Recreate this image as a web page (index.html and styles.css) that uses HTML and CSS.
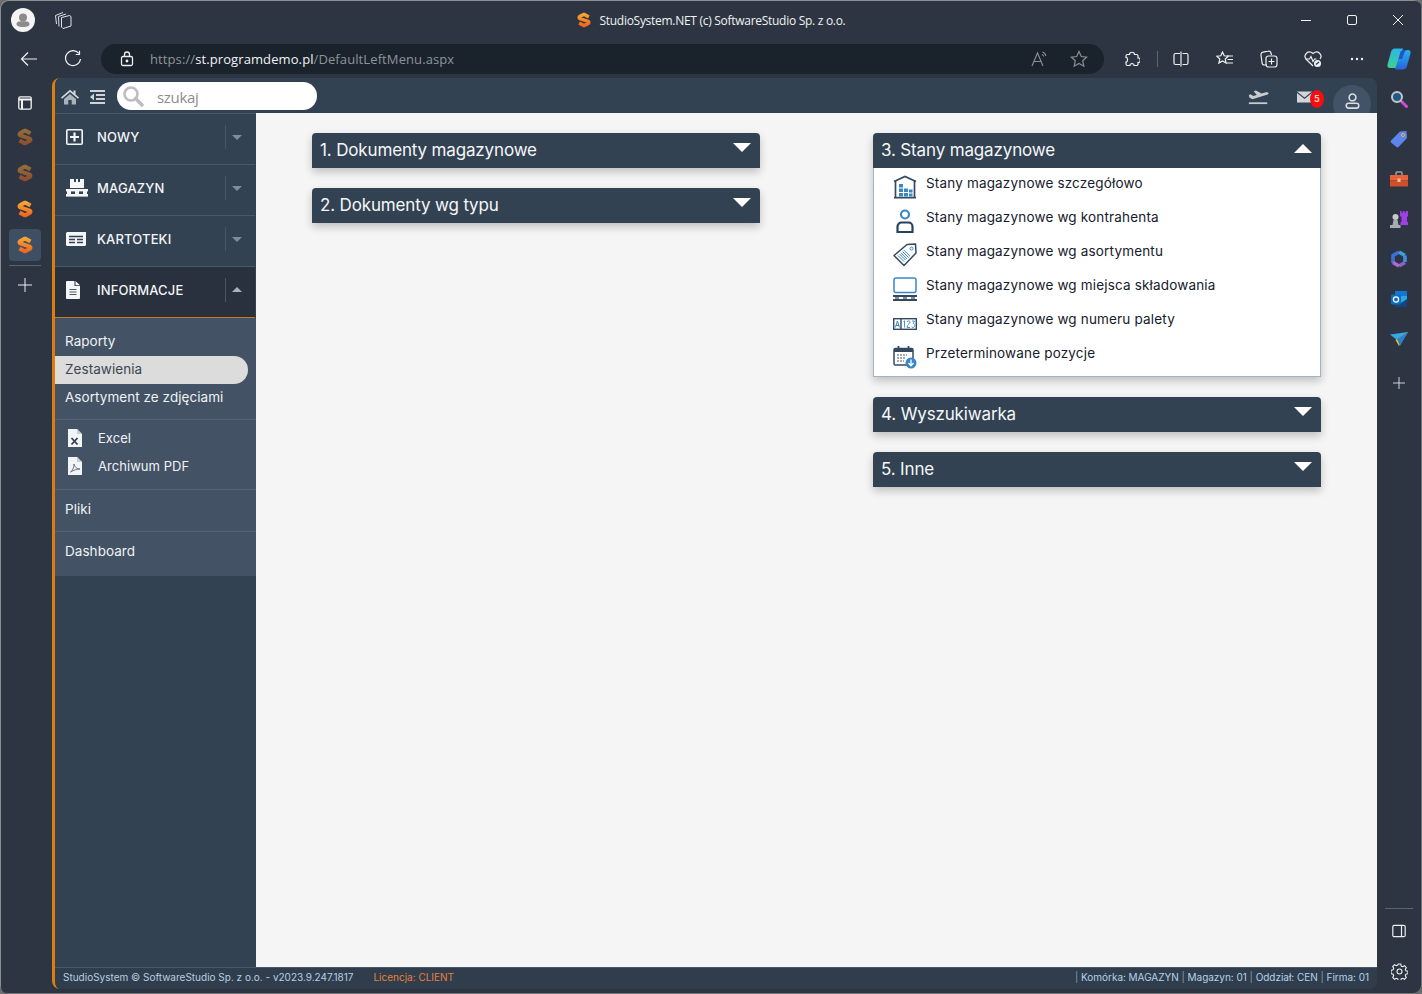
FILE: index.html
```html
<!DOCTYPE html>
<html lang="pl">
<head>
<meta charset="utf-8">
<title>StudioSystem.NET</title>
<link rel="stylesheet" href="styles.css">
</head>
<body>
<svg class="defs" aria-hidden="true">
  <defs>
    <linearGradient id="sgrad" x1="0" y1="0" x2="0" y2="18" gradientUnits="userSpaceOnUse">
      <stop offset="0" stop-color="#fbae35"/><stop offset="1" stop-color="#ee5d1c"/>
    </linearGradient>
    <linearGradient id="cop1" x1="0" y1="0" x2="0" y2="1">
      <stop offset="0" stop-color="#2bb7e8"/><stop offset="1" stop-color="#3fd08f"/>
    </linearGradient>
    <linearGradient id="cop2" x1="0" y1="0" x2="0" y2="1">
      <stop offset="0" stop-color="#22b4ef"/><stop offset="1" stop-color="#2a62dc"/>
    </linearGradient>
    <symbol id="slogo" viewBox="0 0 16 18">
      <polyline points="13.500,5.500 8,2.400 2.600,5.400 2.600,7.200 13.400,10.800 13.400,12.600 8,15.600 2.500,12.500" fill="none" stroke="url(#sgrad)" stroke-width="4" stroke-linejoin="bevel"/>
    </symbol>
  </defs>
</svg>
<div class="window">
  <header class="titlebar">
    <div class="tb-left">
      <span class="avatar">
        <svg width="24" height="24" viewBox="0 0 24 24"><circle cx="12" cy="12" r="12" fill="#f4f4f4"/><circle cx="12" cy="9.500" r="4" fill="#8b8b8b"/><path d="M5.500 16c0-2 2-2.700 6.500-2.700s6.500.7 6.500 2.700c0 1.800-2 3-6.500 3s-6.500-1.200-6.500-3z" fill="#8b8b8b"/></svg>
      </span>
      <svg class="tabs-ico" width="18" height="18" viewBox="0 0 18 18" fill="none" stroke="#dfe3e7" stroke-width="1"><path d="M7.500 6.500L15.500 4.500L17 5.500V15L9 17.500L7.500 16z"/><path d="M5 15.500L4.500 5.500L12 3"/><path d="M2.500 13L1.500 4.500L9 1.500"/></svg>
    </div>
    <div class="tb-title">
      <svg width="14" height="16"><use href="#slogo"/></svg>
      <span>StudioSystem.NET (c) SoftwareStudio Sp. z o.o.</span>
    </div>
    <div class="tb-controls">
      <span class="ctl"><svg width="12" height="12" viewBox="0 0 12 12"><path d="M1 6.500h10" stroke="#f2f2f2" stroke-width="1"/></svg></span>
      <span class="ctl"><svg width="12" height="12" viewBox="0 0 12 12"><rect x="1.500" y="1.500" width="9" height="9" rx="1.500" fill="none" stroke="#f2f2f2"/></svg></span>
      <span class="ctl"><svg width="12" height="12" viewBox="0 0 12 12"><path d="M1 1l10 10M11 1L1 11" stroke="#f2f2f2" stroke-width="1"/></svg></span>
    </div>
  </header>

  <div class="toolbar">
    <span class="tbtn"><svg width="18" height="16" viewBox="0 0 18 16" fill="none" stroke="#f0f2f4" stroke-width="1.200"><path d="M17 8H1.500M8 1.500L1.500 8 8 14.500"/></svg></span>
    <span class="tbtn"><svg width="18" height="18" viewBox="0 0 18 18" fill="none" stroke="#f0f2f4" stroke-width="1.200"><path d="M15 3.500A7.500 7.500 0 1 0 16.500 9"/><path d="M15.500 .8v3.700h-3.700"/></svg></span>
    <div class="address">
      <svg class="lock" width="14" height="16" viewBox="0 0 14 16" fill="none" stroke="#eceef0" stroke-width="1.300"><rect x="1.500" y="5.500" width="11" height="9" rx="1.500"/><path d="M4.500 5.500V3.500a2.500 2.500 0 0 1 5 0v2"/><circle cx="7" cy="10" r=".8" fill="#eceef0"/></svg>
      <span class="url"><span class="dim">https://</span>st.programdemo.pl<span class="dim">/DefaultLeftMenu.aspx</span></span>
      <svg class="read" width="18" height="16" viewBox="0 0 18 16" fill="none" stroke="#8b9096" stroke-width="1.100"><path d="M1 15L6.500 2 12 15M3 10.500h7"/><path d="M11.500 1c2 .6 3 2 3.300 4M11 3.500c1 .3 1.500 1 1.700 2"/></svg>
      <svg class="star" width="18" height="18" viewBox="0 0 18 18" fill="none" stroke="#8b9096" stroke-width="1.200"><path d="M9 1.500l2.300 5 5.400.6-4 3.700 1.100 5.400L9 13.500l-4.800 2.700 1.100-5.400-4-3.700 5.400-.6z"/></svg>
    </div>
    <span class="tbtn tbtn-first"><svg width="16" height="16" viewBox="0 0 16 16" fill="none" stroke="#eef0f2" stroke-width="1.200"><path d="M5.500 3.500c0-3 5-3 5 0h2a1.500 1.500 0 0 1 1.500 1.500v2c3-.5 3 5 0 4.500v1.500a1.500 1.500 0 0 1-1.500 1.500H10c.5-2.500-4.500-2.500-4 0H3.500A1.500 1.500 0 0 1 2 13v-2c2 .5 2-5 0-4.500V5a1.500 1.500 0 0 1 1.500-1.500z"/></svg></span>
    <span class="tsep"></span>
    <span class="tbtn tbtn-split"><svg width="16" height="16" viewBox="0 0 16 16" fill="none" stroke="#eef0f2" stroke-width="1.200"><path d="M7 2.500H2.500a1.500 1.500 0 0 0-1.500 1.500v8a1.500 1.500 0 0 0 1.500 1.500H7M9.500 2.500h4a1.500 1.500 0 0 1 1.500 1.500v8a1.500 1.500 0 0 1-1.500 1.500h-4M8 .5v15"/></svg></span>
    <span class="tbtn"><svg width="18" height="16" viewBox="0 0 18 16" fill="none" stroke="#eef0f2" stroke-width="1.200"><path d="M6.500 1l1.700 3.800 4 .4-3 2.800.9 4-3.600-2-3.600 2 .9-4-3-2.800 4-.4z"/><path d="M11 5h6M11.500 8.500H17M10.500 12H17"/></svg></span>
    <span class="tbtn"><svg width="18" height="18" viewBox="0 0 18 18" fill="none" stroke="#eef0f2" stroke-width="1.200"><path d="M7 15H4.500A2.500 2.500 0 0 1 2 12.500L1 5a2.500 2.500 0 0 1 2-2.800l5-1a2.500 2.500 0 0 1 3 1.800l.5 2"/><rect x="6" y="6" width="11" height="11" rx="2.500"/><path d="M11.500 8.500v6M8.500 11.500h6"/></svg></span>
    <span class="tbtn"><svg width="18" height="18" viewBox="0 0 18 18" fill="none" stroke="#eef0f2" stroke-width="1.200"><path d="M9 16L2 9C-1 5 4-.5 9 3.500 14-.5 19 5 16 9"/><path d="M1.500 9h4l1.500-2.500 2 5 1.500-2.500h2"/><circle cx="13.500" cy="13.500" r="3.500" fill="#eef0f2" stroke="none"/><path d="M12 14.500l3-2.500" stroke="#2c3540"/></svg></span>
    <span class="tbtn"><svg width="14" height="4" viewBox="0 0 14 4"><circle cx="2" cy="2" r="1.200" fill="#f0f2f4"/><circle cx="7" cy="2" r="1.200" fill="#f0f2f4"/><circle cx="12" cy="2" r="1.200" fill="#f0f2f4"/></svg></span>
    <span class="tbtn tbtn-cop"><svg width="24" height="24" viewBox="0 0 24 24"><path d="M8 1.500H16L10.500 19c-.5 1.500-2 2-3.500 2H3C1 21 0 19.500 .5 17.500L4 5C4.500 3 6 1.500 8 1.500z" fill="url(#cop1)"/><path d="M16 22.500H8L13.500 5c.5-1.500 2-2 3.500-2H21c2 0 3 1.500 2.500 3.500L20 19c-.5 2-2 3.500-4 3.500z" fill="url(#cop2)"/><path d="M13.500 5c.5-1.500 2-2 3.500-2H21c-2 0-3 1-3.500 2.500L15 12h-3.500z" fill="#2452c8"/></svg></span>
  </div>

  <div class="body">
    <nav class="rail-left">
      <span class="rail-item rail-item-top"><svg width="14" height="14" viewBox="0 0 14 14" fill="none" stroke="#f4f5f6" stroke-width="1.300"><rect x=".8" y=".8" width="12.400" height="12.400" rx="1.500"/><path d="M.8 3.500h12.400" stroke-width="2"/><path d="M4 3.500v9.700" stroke-width="2"/></svg></span>
      <span class="rail-item rail-dim"><svg width="16" height="18"><use href="#slogo"/></svg></span>
      <span class="rail-item rail-dim"><svg width="16" height="18"><use href="#slogo"/></svg></span>
      <span class="rail-item"><svg width="16" height="18"><use href="#slogo"/></svg></span>
      <span class="rail-item rail-active"><svg width="16" height="18"><use href="#slogo"/></svg></span>
      <span class="rail-divider"></span>
      <span class="rail-add"><svg width="14" height="14" viewBox="0 0 14 14"><path d="M7 0v14M0 7h14" stroke="#eef0f2" stroke-width="1"/></svg></span>
    </nav>

    <div class="app">
      <div class="topbar">
        <div class="tb-group">
          <svg class="home" width="18" height="16" viewBox="0 0 18 16"><path d="M9 .8L0 8.500l1 1.200L9 3l8 6.700 1-1.200-3.500-3V1.500H12.500v2.300z" fill="#d4d9de"/><path d="M3 10l6-5 6 5v5.500h-4.300V11H7.300v4.500H3z" fill="#aab1b8"/></svg>
          <svg class="outdent" width="15" height="14" viewBox="0 0 15 14" fill="#cfd4d9"><rect x="0" y="0" width="15" height="2"/><rect x="6" y="4" width="9" height="2"/><rect x="6" y="8" width="9" height="2"/><rect x="0" y="12" width="15" height="2"/><path d="M4 3.500v7L0 7z"/></svg>
          <div class="search">
            <svg width="22" height="22" viewBox="0 0 22 22" fill="none" stroke="#bdbdbd"><circle cx="9" cy="9" r="6.500" stroke-width="2.600"/><path d="M13.500 13.500l6.500 6.500" stroke-width="3.400" stroke-linecap="round"/></svg>
            <span class="placeholder">szukaj</span>
          </div>
        </div>
        <div class="tb-group tb-right">
          <svg class="plane" width="21" height="15" viewBox="0 0 24 16" fill="#c8cdd2"><path d="M1 5l2-.7 3 2 4-1.300L6.500.8l2.500-.8 6.500 3.500 5-1.500c2-.5 3 .5 3 1.300s-1 1.200-2 1.500L5 10 1.500 8z"/><rect x="1" y="13.500" width="21" height="2"/></svg>
          <span class="mail">
            <svg width="15" height="12" viewBox="0 0 15 11"><path d="M0 0h15L7.500 6z" fill="#d2d6da"/><path d="M0 1.500V11h15V1.500L7.500 7.500z" fill="#d2d6da"/></svg>
            <span class="badge">5</span>
          </span>
          <span class="usercircle">
            <svg width="15" height="16" viewBox="0 0 16 18" fill="none" stroke="#d8dde2" stroke-width="1.800"><circle cx="8" cy="5" r="3.800"/><rect x="1" y="11.500" width="14" height="5.500" rx="2.500"/></svg>
          </span>
        </div>
      </div>

      <div class="workspace">
        <aside class="sidebar">
          <div class="sb-row">
            <svg class="sb-ico" width="17" height="16" viewBox="0 0 17 16"><rect x=".8" y=".8" width="15.400" height="14.400" rx="1" fill="none" stroke="#f5f6f7" stroke-width="1.600"/><path d="M8.500 3.500v9M4 8h9" stroke="#f5f6f7" stroke-width="2.200"/></svg>
            <span class="sb-label">NOWY</span>
            <span class="sb-sep"></span>
            <span class="caret-down"></span>
          </div>
          <div class="sb-row">
            <svg class="sb-ico" width="22" height="18" viewBox="0 0 22 18" fill="#f5f6f7"><path d="M4 0h4v3h2V0h2v3h2V0h4v9H4z"/><rect x="0" y="10" width="22" height="2.400"/><rect x="0" y="15" width="22" height="2.600"/><rect x="1" y="12" width="4" height="3"/><rect x="9" y="12" width="4" height="3"/><rect x="17" y="12" width="4" height="3"/></svg>
            <span class="sb-label">MAGAZYN</span>
            <span class="sb-sep"></span>
            <span class="caret-down"></span>
          </div>
          <div class="sb-row">
            <svg class="sb-ico" width="20" height="14" viewBox="0 0 20 14"><path d="M1.500 0H20v12.500a1.500 1.500 0 0 1-1.500 1.500H1.500A1.500 1.500 0 0 1 0 12.500V1.500A1.500 1.500 0 0 1 1.500 0z" fill="#f5f6f7"/><path d="M3 4.500h14M3 7.500h6M11 7.500h6M3 10.500h6M11 10.500h6" stroke="#334252" stroke-width="1.300"/></svg>
            <span class="sb-label">KARTOTEKI</span>
            <span class="sb-sep"></span>
            <span class="caret-down"></span>
          </div>
          <div class="sb-row sb-row-open">
            <svg class="sb-ico" width="14" height="18" viewBox="0 0 14 18"><path d="M0 1a1 1 0 0 1 1-1h7.500v5H14v12a1 1 0 0 1-1 1H1a1 1 0 0 1-1-1z" fill="#f5f6f7"/><path d="M9.500 0L14 4.200H9.500z" fill="#f5f6f7"/><path d="M3.500 8.500h7M3.500 11h7M3.500 13.500h7" stroke="#4a5868"/></svg>
            <span class="sb-label">INFORMACJE</span>
            <span class="sb-sep"></span>
            <span class="caret-up"></span>
          </div>
          <div class="submenu">
            <div class="sub-group sub-first">
              <a class="sub-item">Raporty</a>
              <a class="sub-item sub-active">Zestawienia</a>
              <a class="sub-item">Asortyment ze zdjęciami</a>
            </div>
            <div class="sub-group sub-files">
              <a class="sub-item sub-file">
                <svg width="14" height="18" viewBox="0 0 14 18"><path d="M0 0h9l5 5v13H0z" fill="#f2f4f6"/><path d="M9 0v5h5" fill="#c5ccd3"/><path d="M3.500 9l6 6.500M9.500 9l-6 6.500" stroke="#33414f" stroke-width="1.800"/></svg>
                <span>Excel</span>
              </a>
              <a class="sub-item sub-file">
                <svg width="14" height="18" viewBox="0 0 14 18"><path d="M0 0h9l5 5v13H0z" fill="#f2f4f6"/><path d="M9 0v5h5" fill="#c5ccd3"/><path d="M2.500 15c2-1 3.500-4.500 3.500-8 1 3.500 3 5 6 5-3 0-6 1-9.500 3z" fill="none" stroke="#6b7783" stroke-width="1"/></svg>
                <span>Archiwum PDF</span>
              </a>
            </div>
            <div class="sub-group sub-single"><a class="sub-item">Pliki</a></div>
            <div class="sub-group sub-single"><a class="sub-item">Dashboard</a></div>
          </div>
        </aside>

        <main class="content">
          <div class="col">
            <section class="panel">
              <h2 class="panel-head"><span>1. Dokumenty magazynowe</span><i class="tri-down"></i></h2>
            </section>
            <section class="panel">
              <h2 class="panel-head"><span>2. Dokumenty wg typu</span><i class="tri-down"></i></h2>
            </section>
          </div>
          <div class="col">
            <section class="panel">
              <h2 class="panel-head"><span>3. Stany magazynowe</span><i class="tri-up"></i></h2>
              <ul class="panel-body">
                <li class="p-item">
                  <svg width="24" height="24" viewBox="0 0 24 24" fill="none"><path d="M1 6.500L12 1.500l11 5" stroke="#34495e" stroke-width="1.700"/><path d="M2.500 6v16M21.500 6v16" stroke="#34495e" stroke-width="1.700"/><rect x="1" y="21.800" width="22" height="1.700" fill="#34495e"/><g fill="#3a86c8"><rect x="6" y="9" width="4" height="3.500"/><rect x="6" y="13.500" width="4" height="3.500"/><rect x="6" y="18" width="4" height="3.500"/><rect x="11" y="13.500" width="4" height="3.500"/><rect x="11" y="18" width="4" height="3.500"/><rect x="16" y="14.500" width="3.500" height="3"/><rect x="16" y="18.500" width="3.500" height="3"/></g></svg>
                  <span>Stany magazynowe szczegółowo</span>
                </li>
                <li class="p-item">
                  <svg width="24" height="24" viewBox="0 0 24 24" fill="none" stroke-width="2.200"><circle cx="12" cy="5.500" r="4" stroke="#3a86c8"/><path d="M8.500 13.500h7a4 4 0 0 1 4 4v5.500h-15v-5.500a4 4 0 0 1 4-4z" stroke="#26425c"/></svg>
                  <span>Stany magazynowe wg kontrahenta</span>
                </li>
                <li class="p-item">
                  <svg width="24" height="24" viewBox="0 0 24 24" fill="none"><path d="M1 12.500L14 1.500l8.500-.5.500 9L11 22.500z" stroke="#34495e" stroke-width="1.500" stroke-linejoin="round"/><circle cx="18.500" cy="5.500" r="1.500" stroke="#3a86c8"/><path d="M5 12.500l6 6M6.500 11l6 6M8 9.800l6 6M9.500 8.500l6 6M11 7.200l6 6" stroke="#3a86c8" stroke-width="1"/></svg>
                  <span>Stany magazynowe wg asortymentu</span>
                </li>
                <li class="p-item">
                  <svg width="24" height="24" viewBox="0 0 24 24" fill="none"><rect x="1" y="1" width="22" height="14.500" rx="2" stroke="#3a86c8" stroke-width="1.500"/><rect x="0" y="18" width="24" height="2" fill="#34495e"/><rect x="0" y="22" width="24" height="2" fill="#34495e"/><rect x="2" y="20" width="4" height="2" fill="#7f8f9f"/><rect x="10" y="20" width="4" height="2" fill="#7f8f9f"/><rect x="18" y="20" width="4" height="2" fill="#7f8f9f"/></svg>
                  <span>Stany magazynowe wg miejsca składowania</span>
                </li>
                <li class="p-item">
                  <svg width="24" height="24" viewBox="0 0 24 24" fill="none"><rect x=".7" y="7.700" width="22.600" height="10.600" stroke="#34495e" stroke-width="1.400"/><path d="M8 7.700v10.600" stroke="#34495e" stroke-width="1.400"/><path d="M2.300 16.500L4.400 10l2.100 6.500M3 14.500h3" stroke="#3a86c8" stroke-width="1"/><path d="M10.500 10.500l1-.7v6.700M14 11c0-1.500 3-1.500 3 0s-3 3-3 5.500h3M19 10h2.500l-1.200 2.500c2 0 2 4-.2 4-1 0-1.300-.5-1.300-1" stroke="#3a86c8" stroke-width=".9"/></svg>
                  <span>Stany magazynowe wg numeru palety</span>
                </li>
                <li class="p-item">
                  <svg width="24" height="24" viewBox="0 0 24 24" fill="none"><rect x="1" y="3.500" width="19" height="16.500" rx="1.500" stroke="#34495e" stroke-width="1.500"/><rect x="1" y="3.500" width="19" height="3.500" fill="#34495e"/><path d="M5.500 1v4M15.500 1v4" stroke="#34495e" stroke-width="1.800"/><path d="M4 10h10M4 13h8M4 16h7" stroke="#7f8f9f" stroke-width="1.600" stroke-dasharray="2 1"/><circle cx="18" cy="18" r="5.500" fill="#3a86c8"/><path d="M18 14.500v6M15.500 18l2.500 2.700 2.500-2.700" stroke="#fff" stroke-width="1.300"/></svg>
                  <span>Przeterminowane pozycje</span>
                </li>
              </ul>
            </section>
            <section class="panel">
              <h2 class="panel-head"><span>4. Wyszukiwarka</span><i class="tri-down"></i></h2>
            </section>
            <section class="panel">
              <h2 class="panel-head"><span>5. Inne</span><i class="tri-down"></i></h2>
            </section>
          </div>
        </main>
      </div>

      <footer class="statusbar">
        <div class="st-left">
          <span class="st-copy">StudioSystem © SoftwareStudio Sp. z o.o. - v2023.9.247.1817</span>
          <span class="st-lic">Licencja: CLIENT</span>
        </div>
        <div class="st-right"><i>|</i> Komórka: MAGAZYN <i>|</i> Magazyn: 01 <i>|</i> Oddział: CEN <i>|</i> Firma: 01</div>
      </footer>
    </div>

    <aside class="rail-right">
      <span class="rr-item"><svg width="18" height="18" viewBox="0 0 18 18"><circle cx="7" cy="7" r="5" fill="#1f5a84" stroke="#c3c7cb" stroke-width="2"/><path d="M11 11l1.500 1.500" stroke="#c3c7cb" stroke-width="2.400"/><path d="M12.500 12.500l4 4" stroke="#d648d8" stroke-width="3" stroke-linecap="round"/></svg></span>
      <span class="rr-item"><svg width="18" height="18" viewBox="0 0 18 18"><path d="M1 10.500L10 1.500l6.500-.5.500 7-8.500 9a1.500 1.500 0 0 1-2 0L1 12.500a1.500 1.500 0 0 1 0-2z" fill="#5b86f0"/><circle cx="13" cy="5" r="1.500" fill="#7b5bd6" stroke="#f3c33b"/></svg></span>
      <span class="rr-item"><svg width="18" height="16" viewBox="0 0 18 16"><path d="M6 4V2a1 1 0 0 1 1-1h4a1 1 0 0 1 1 1v2" fill="none" stroke="#9aa0a6" stroke-width="1.500"/><rect x="0" y="4" width="18" height="5.500" fill="#e9623a"/><rect x="0" y="9.500" width="18" height="6" fill="#cf4f28"/><rect x="7.500" y="7.500" width="3" height="3.500" fill="#f0c8a8"/></svg></span>
      <span class="rr-item"><svg width="18" height="18" viewBox="0 0 18 18"><circle cx="5.500" cy="7" r="3" fill="#c5c8cc"/><path d="M3.500 10h4l1 5h2v3H0v-3h2.500z" fill="#a8abb0"/><path d="M10 1h1.500v1.500H13V1h1.500v1.500H16V1h2v5l-1 1v5h1v3h-7.500v-3h1V7l-1.500-1z" fill="#a03fe8"/></svg></span>
      <span class="rr-item"><svg width="18" height="18" viewBox="0 0 18 18" fill="none" stroke-width="3.600"><path d="M3 13V5.500L9 2" stroke="#3c6fd6"/><path d="M9 2l6 3.500" stroke="#3aa0d8"/><path d="M15 5.500V12" stroke="#3f8fe0"/><path d="M15 12.500l-6 3.500" stroke="#8860cf"/><path d="M9 16l-6-3.500" stroke="#b26ad0"/></svg></span>
      <span class="rr-item"><svg width="18" height="18" viewBox="0 0 18 18"><rect x="5" y="1" width="12" height="16" rx="1" fill="#28a8ea"/><rect x="5" y="1" width="12" height="5" fill="#0f78d4"/><path d="M5 9l6 4 6-4v8H5z" fill="#14447d"/><rect x="1" y="4.500" width="10" height="10" rx="1" fill="#0f6cbd"/><circle cx="6" cy="9.500" r="2.600" fill="none" stroke="#fff" stroke-width="1.300"/></svg></span>
      <span class="rr-item"><svg width="18" height="16" viewBox="0 0 18 16"><path d="M0 3.500L18 1 7 9z" fill="#35a6e8"/><path d="M18 1L9 15 5.500 9z" fill="#f4c11f"/><path d="M18 1l-8 14-3-7z" fill="#2a7fd0"/></svg></span>
      <span class="rr-item rr-add"><svg width="14" height="14" viewBox="0 0 14 14"><path d="M7 1v12M1 7h12" stroke="#cfd3d7" stroke-width="1"/></svg></span>
      <span class="rr-divider"></span>
      <span class="rr-item"><svg width="14" height="14" viewBox="0 0 14 14" fill="none" stroke="#eef0f2" stroke-width="1.200"><rect x=".8" y="1.300" width="12.400" height="11.400" rx="1.500"/><path d="M9.500 1.300v11.400"/></svg></span>
      <span class="rr-item"><svg width="17" height="17" viewBox="0 0 17 17" fill="none" stroke="#eef0f2" stroke-width="1.100"><circle cx="8.500" cy="8.500" r="2.500"/><path d="M7.200 1h2.600l.4 2 1.500.7 1.800-1 1.800 1.900-1 1.800.6 1.400 2 .5v2.500l-2 .5-.6 1.400 1 1.800-1.800 1.800-1.800-1-1.500.6-.4 2H7.200l-.4-2-1.500-.6-1.800 1-1.800-1.800 1-1.800-.6-1.400-2-.5V7.300l2-.5.600-1.400-1-1.800 1.800-1.900 1.800 1 1.500-.7z"/></svg></span>
    </aside>
  </div>
</div>
</body>
</html>
```

FILE: styles.css
```css
* { box-sizing: border-box; }
html, body { margin: 0; height: 100%; overflow: hidden; background: #6f6f6f; }
body { font-family: "Inter", "Liberation Sans", sans-serif; }
.defs { position: absolute; width: 0; height: 0; }
svg { display: block; flex: none; }

.window {
  width: 1422px; height: 994px; background: #2c3541;
  border-radius: 8px;
  box-shadow: inset 1px 1px 0 #8c8f92, inset -1px -1px 0 #6f7275;
  display: flex; flex-direction: column;
  overflow: hidden;
}

/* title bar */
.titlebar { height: 40px; display: grid; grid-template-columns: 1fr auto 1fr; align-items: center; flex: none; }
.tb-left { display: flex; align-items: center; padding-left: 11px; }
.tabs-ico { margin-left: 19px; }
.tb-title { display: flex; align-items: center; gap: 9px; color: #f0f2f4; font: 12px "Open Sans", sans-serif; letter-spacing: -.285px; }
.tb-controls { display: flex; justify-content: flex-end; padding-right: 1px; }
.ctl { width: 46px; height: 40px; display: flex; align-items: center; justify-content: center; }

/* toolbar */
.toolbar { height: 38px; display: flex; align-items: center; padding-left: 7px; flex: none; }
.tbtn { width: 44px; height: 34px; display: flex; align-items: center; justify-content: center; flex: none; }
.tbtn-first { margin-left: 6px; }
.tbtn-split { width: 45px; }
.tbtn-cop { width: 40px; }
.tsep { width: 1px; height: 16px; background: #5c6670; margin: 0 0 0 3px; flex: none; }
.address {
  width: 1003px; height: 30px; margin-left: 6px; margin-top: -1px; flex: none;
  background: #1a222c; border-radius: 15px;
  display: flex; align-items: center; padding-left: 19px;
}
.url { margin-left: 16px; font: 13px "Open Sans", sans-serif; color: #f0f2f4; letter-spacing: .1px; flex: 1; }
.url .dim { color: #8d949b; }
.read { margin-right: 21px; }
.star { margin-right: 16px; }

/* main body */
.body { flex: 1; display: flex; min-height: 0; }
.rail-left { width: 52px; flex: none; display: flex; flex-direction: column; align-items: center; padding: 9px 2px 0 0; }
.rail-item { width: 32px; height: 36px; display: flex; align-items: center; justify-content: center; flex: none; }
.rail-item-top { height: 32px; }
.rail-dim svg { opacity: .5; }
.rail-active { height: 32px; margin-top: 2px; background: #3f4f63; border-radius: 4px; }
.rail-divider { width: 32px; height: 1px; background: #5b6570; margin-top: 4px; flex: none; }
.rail-add { margin-top: 12px; }

.app {
  width: 1325px; margin-bottom: 5px; flex: none;
  border-left: 3px solid #d97f0f; border-radius: 8px;
  background: #334252; display: flex; flex-direction: column; overflow: hidden;
}
.topbar { height: 35px; flex: none; display: flex; justify-content: space-between; overflow: hidden; background: #334252; }
.tb-group { display: flex; align-items: center; }
.home { margin-left: 6px; margin-top: 3px; }
.outdent { margin-left: 11px; margin-top: 3px; }
.search { width: 200px; height: 28px; margin-left: 12px; margin-top: 1px; background: #fff; border-radius: 14px; display: flex; align-items: center; padding-left: 5px; }
.placeholder { margin-left: 13px; margin-top: 2px; font: 15px "Open Sans", sans-serif; color: #8d8d8d; letter-spacing: -.3px; }
.tb-right { padding-right: 6px; align-items: flex-start; }
.plane { margin-top: 12px; }
.mail { position: relative; margin-left: 28px; margin-top: 13px; width: 39px; }
.badge {
  position: absolute; left: 13px; top: -1px; width: 14px; height: 18px; border-radius: 50%;
  background: #f60d0d; color: #f5c6c6; font: 700 9px/18px "Inter", sans-serif; text-align: center;
}
.usercircle { width: 38px; height: 38px; border-radius: 50%; background: #425267; margin-top: 7px; margin-left: -3px; display: flex; justify-content: center; padding-top: 8px; }

.workspace { flex: 1; display: flex; min-height: 0; }
.sidebar { width: 201px; flex: none; background: #334252; border-top: 1px solid #475869; }
.sb-row { height: 51px; display: flex; align-items: center; border-bottom: 1px solid #475869; padding: 0 0 5px 0; margin-right: 1px; }
.sb-row > svg { margin-left: 11px; }
.sb-label { color: #f3f5f7; font-size: 13px; font-weight: 500; letter-spacing: .15px; position: absolute; left: 97px; }
.sb-sep { width: 1px; height: 24px; background: #465668; position: absolute; left: 225px; }
.caret-down, .caret-up { position: absolute; left: 232px; width: 0; height: 0; border-left: 5px solid transparent; border-right: 5px solid transparent; }
.caret-down { border-top: 5px solid #7f8c99; margin-top: 2px; }
.caret-up { border-bottom: 5px solid #a9b2bb; margin-top: -1px; }
.sb-row-open { background: #28313d; border-bottom: 1px solid #c77a1c; }

.submenu { background: #435264; height: 258px; display: flex; flex-direction: column; }
.sub-group { border-bottom: 1px solid #546375; }
.sub-group:last-child { border-bottom: 0; }
.sub-first { height: 102px; padding-top: 10px; }
.sub-files { height: 70px; padding-top: 5px; }
.sub-single { height: 42px; display: flex; align-items: center; padding-bottom: 2px; }
.sub-single:last-child { height: 44px; padding-bottom: 5px; }
.sub-item { display: flex; align-items: center; gap: 16px; height: 28px; padding: 0 0 2px 10px; color: #f0f3f6; font-size: 13.5px; letter-spacing: .05px; }
.sub-active { width: 193px; background: #dcdcdc; color: #3b4653; border-radius: 0 14px 14px 0; }
.sub-file { padding-left: 13px; font-size: 13px; }

.content { flex: 1; background: #f5f5f5; display: grid; grid-template-columns: 448px 448px; column-gap: 113px; padding: 20px 0 0 56px; align-items: start; }
.col { display: flex; flex-direction: column; gap: 20px; }
.panel { box-shadow: 0 4px 9px rgba(0,0,0,.22); border-radius: 4px 4px 0 0; }
.panel-head {
  margin: 0; height: 35px; background: #334252; color: #f5f7f9; border-radius: 4px 4px 0 0;
  font-size: 17px; font-weight: 400; letter-spacing: -.15px;
  display: flex; align-items: center; justify-content: space-between; padding: 0 9px 1px 8px;
}
.tri-down, .tri-up { width: 0; height: 0; border-left: 9px solid transparent; border-right: 9px solid transparent; margin-top: -5px; }
.tri-down { border-top: 9px solid #fff; }
.tri-up { border-bottom: 9px solid #fff; margin-top: -4px; }
.panel-body { list-style: none; margin: 0; padding: 2px 0 1px 19px; background: #fff; border: 1px solid #a4b3c4; border-top: 0; height: 209px; }
.p-item { height: 34px; display: flex; gap: 9px; font-size: 13.5px; letter-spacing: .17px; color: #16202c; line-height: 26px; }
.p-item svg { margin-top: 5px; }

.statusbar { height: 22px; flex: none; background: #2f3d4c; border-top: 1px solid #46596a; display: flex; justify-content: space-between; align-items: center; padding: 0 8px 3px 8px; font-size: 10px; }
.st-left { display: flex; gap: 20px; align-items: center; }
.st-copy { color: #b9cfe2; }
.st-lic { color: #e8803a; }
.st-right { color: #b5d2ea; letter-spacing: -.03px; }
.st-right i { font-style: normal; color: #8b99a6; }

.rail-right { flex: 1; display: flex; flex-direction: column; align-items: center; padding: 1px 1px 3px 0; }
.rr-item { width: 40px; height: 40px; display: flex; align-items: center; justify-content: center; flex: none; }
.rr-add { margin-top: 4px; }
.rr-divider { width: 28px; height: 1px; background: #5b6570; margin-top: auto; margin-bottom: 2px; flex: none; }
```
